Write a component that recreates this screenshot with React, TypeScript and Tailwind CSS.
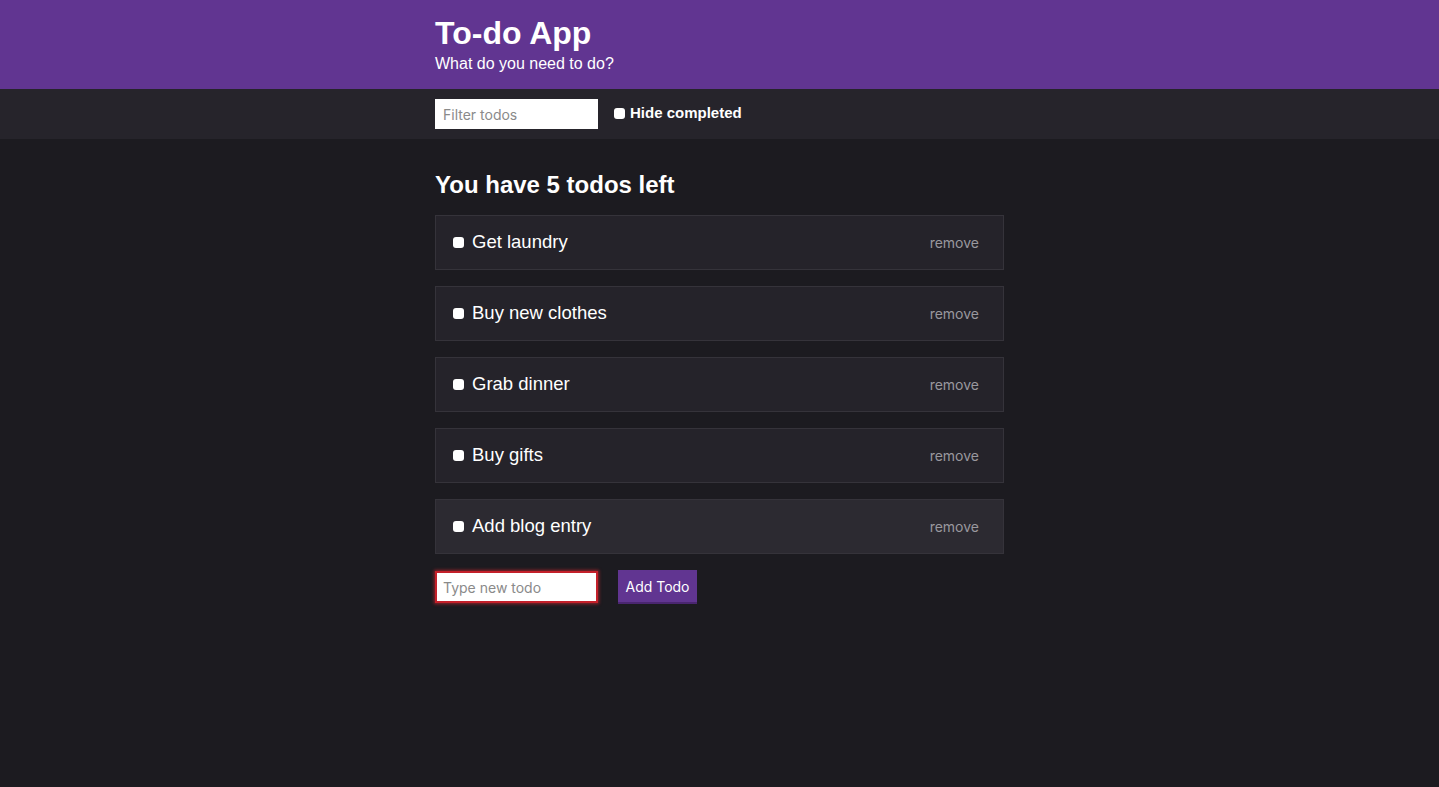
const todos = [
  { id: 1, title: "Get laundry" },
  { id: 2, title: "Buy new clothes" },
  { id: 3, title: "Grab dinner" },
  { id: 4, title: "Buy gifts" },
  { id: 5, title: "Add blog entry" },
];

const Box = () => (
  <input
    type="checkbox"
    className="appearance-none w-[11px] h-[11px] rounded-[3px] bg-white shrink-0"
  />
);

const App = () => {
  return (
    <div className="min-h-screen bg-[#1c1b20] font-['Liberation_Sans',Arial,sans-serif] text-white">
      <header className="bg-[#613591] h-[89px]">
        <div className="w-[569px] mx-auto pt-[15px]">
          <h1 className="text-[32px] font-bold leading-[36px]">To-do App</h1>
          <p className="text-[16px] leading-[20px] mt-[3px]">What do you need to do?</p>
        </div>
      </header>

      <div className="bg-[#26242b] h-[50px]">
        <div className="w-[569px] mx-auto pt-[10px] flex items-center">
          <input
            placeholder="Filter todos"
            className="w-[163px] h-[30px] bg-white px-2 text-[14px] text-black placeholder:text-[#8a8a8a] font-['Inter',sans-serif] outline-none"
          />
          <label className="ml-4 flex items-center gap-[5px] text-[15px] font-bold -mt-[1px]">
            <Box />
            Hide completed
          </label>
        </div>
      </div>

      <main className="w-[569px] mx-auto pt-[32px]">
        <h2 className="text-[24px] font-bold leading-[28px]">You have 5 todos left</h2>
        <ul className="mt-[16px] flex flex-col gap-[16px]">
          {todos.map((t, i) => (
            <li
              key={t.id}
              className={`h-[55px] border border-[#35333a] flex items-center pl-[17px] pr-[24px] ${
                i === todos.length - 1 ? "bg-[#2c2a31]" : "bg-[#25232a]"
              }`}
            >
              <Box />
              <span className="ml-[8px] text-[18.5px] leading-none">{t.title}</span>
              <button className="ml-auto text-[14px] text-[#9a989e] font-['Inter',sans-serif]">
                remove
              </button>
            </li>
          ))}
        </ul>
        <form className="mt-[16px] flex items-center" onSubmit={(e) => e.preventDefault()}>
          <input
            placeholder="Type new todo"
            autoFocus
            className="w-[163px] h-[32px] bg-white px-[6px] text-[14px] text-black placeholder:text-[#8a8a8a] font-['Inter',sans-serif] border-2 border-[#c4202a] shadow-[0_0_3px_1px_rgba(220,40,50,0.6)] outline-none"
          />
          <button className="ml-[20px] h-[34px] w-[79px] bg-[#613591] border-b-[2px] border-[#4a2670] text-[14px] text-white font-['Inter',sans-serif]">
            Add Todo
          </button>
        </form>
      </main>
    </div>
  );
};

export default App;
